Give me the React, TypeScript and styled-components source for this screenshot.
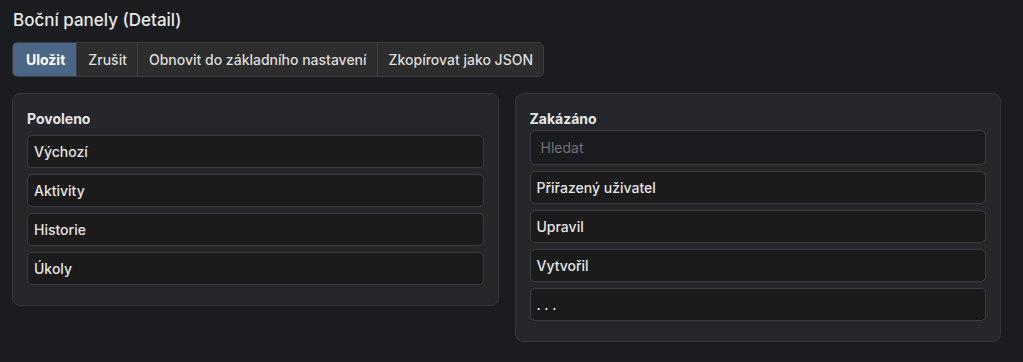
import React from 'react';
import styled, { createGlobalStyle } from 'styled-components';

const GlobalStyle = createGlobalStyle`
  html, body {
    margin: 0;
    padding: 0;
    background: #1b1c1f;
    color: #e4e4e4;
    font-family: Inter, "Noto Sans", sans-serif;
  }
`;

const Page = styled.div`
  padding: 9px 22px 20px 12px;
  min-height: 362px;
  box-sizing: border-box;
`;

const Title = styled.h2`
  margin: 0 0 11px 1px;
  font-size: 17px;
  font-weight: 500;
  line-height: 22px;
  color: #e8e8e8;
`;

const ButtonGroup = styled.div`
  display: inline-flex;
  border: 1px solid #3d3e41;
  border-radius: 5px;
  overflow: hidden;
  margin-bottom: 16px;
`;

const GroupButton = styled.button<{ $primary?: boolean }>`
  height: 33px;
  border: none;
  border-left: ${(p) => (p.$primary ? 'none' : '1px solid #3d3e41')};
  background: ${(p) => (p.$primary ? '#4b6686' : '#2d2d2e')};
  color: ${(p) => (p.$primary ? '#ffffff' : '#dcdcdc')};
  font-family: inherit;
  font-size: 14px;
  font-weight: ${(p) => (p.$primary ? 700 : 500)};
  padding: ${(p) => (p.$primary ? '0 11px 0 13px' : '0 10px 0 11px')};
  cursor: pointer;
`;

const Columns = styled.div`
  display: grid;
  grid-template-columns: 1fr 1fr;
  gap: 16px;
  align-items: start;
`;

const Panel = styled.section`
  background: #25272b;
  border: 1px solid #34363a;
  border-radius: 8px;
  padding: 17px 14px 20px 14px;
`;

const PanelLabel = styled.div<{ $gap: number }>`
  font-size: 14px;
  font-weight: 700;
  line-height: 16px;
  margin-bottom: ${(p) => p.$gap}px;
  color: #e6e6e6;
`;

const List = styled.div`
  display: flex;
  flex-direction: column;
  gap: 6px;
`;

const Item = styled.div`
  height: 31px;
  display: flex;
  align-items: center;
  padding: 0 6px;
  background: #1b1b1c;
  border: 1px solid #3a3c40;
  border-radius: 5px;
  font-size: 14px;
  font-weight: 500;
  color: #e4e4e4;
`;

const Search = styled.input`
  height: 35px;
  box-sizing: border-box;
  padding: 0 10px;
  background: #1b1c1f;
  border: 1px solid #3a3c40;
  border-radius: 5px;
  font-family: inherit;
  font-size: 14px;
  color: #e4e4e4;
  outline: none;
  &::placeholder {
    color: #6f7176;
  }
`;

const enabled = ['Výchozí', 'Aktivity', 'Historie', 'Úkoly'];
const disabled = ['Přiřazený uživatel', 'Upravil', 'Vytvořil', '. . .'];

const App: React.FC = () => (
  <>
    <GlobalStyle />
    <Page>
      <Title>Boční panely (Detail)</Title>
      <ButtonGroup>
        <GroupButton $primary>Uložit</GroupButton>
        <GroupButton>Zrušit</GroupButton>
        <GroupButton>Obnovit do základního nastavení</GroupButton>
        <GroupButton>Zkopírovat jako JSON</GroupButton>
      </ButtonGroup>
      <Columns>
        <Panel>
          <PanelLabel $gap={8}>Povoleno</PanelLabel>
          <List>
            {enabled.map((name) => (
              <Item key={name}>{name}</Item>
            ))}
          </List>
        </Panel>
        <Panel>
          <PanelLabel $gap={3}>Zakázáno</PanelLabel>
          <List>
            <Search placeholder="Hledat" />
            {disabled.map((name) => (
              <Item key={name}>{name}</Item>
            ))}
          </List>
        </Panel>
      </Columns>
    </Page>
  </>
);

export default App;
